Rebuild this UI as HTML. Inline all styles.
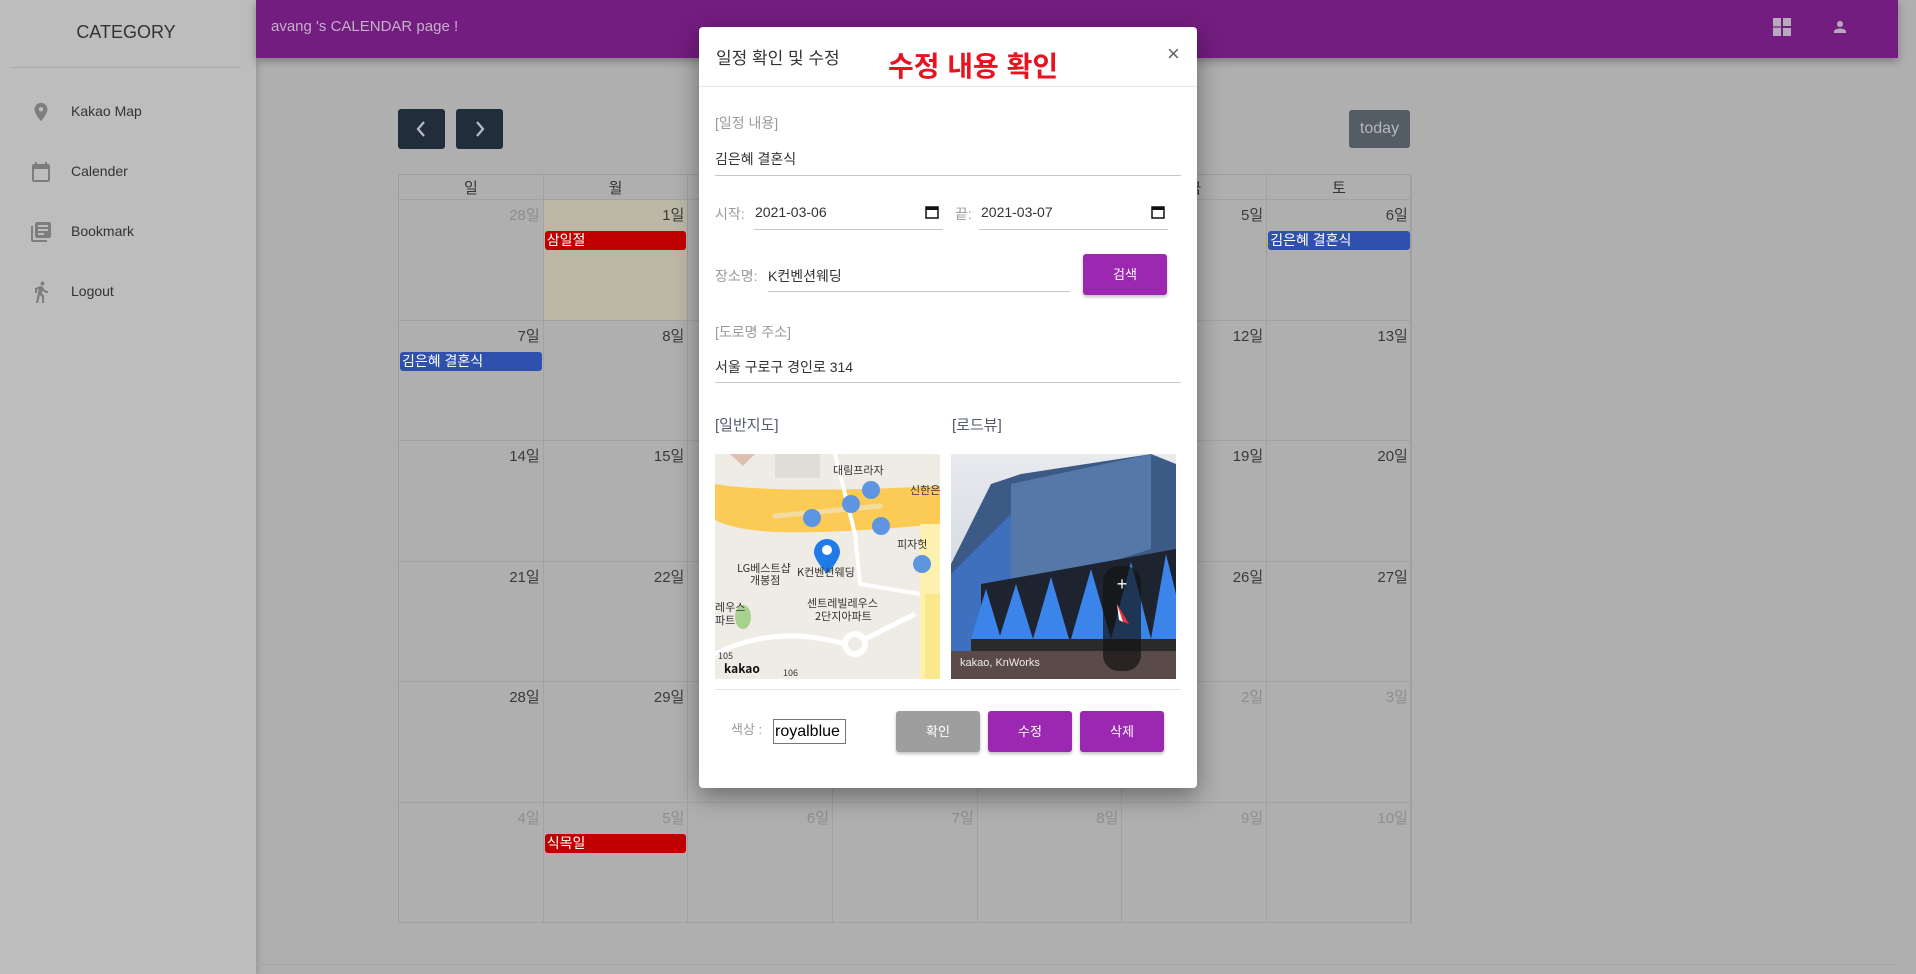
<!DOCTYPE html>
<html><head><meta charset="utf-8"><style>
*{box-sizing:border-box;margin:0;padding:0}
body{width:1916px;height:974px;overflow:hidden;background:#afafaf;font-family:"Liberation Sans","Noto Sans CJK KR",sans-serif;position:relative}
.abs{position:absolute}
#side{left:0;top:0;width:256px;height:974px;background:#bdbdbd;box-shadow:2px 0 6px rgba(0,0,0,.15)}
#top{left:256px;top:0;width:1642px;height:58px;background:#741d80;box-shadow:0 3px 8px rgba(0,0,0,.3)}
.menu{position:absolute;left:71px;font-size:14px;color:#333}
.nav{position:absolute;top:109px;width:47px;height:40px;background:#212d3b;border-radius:3px}
.cal{position:absolute;left:398px;top:174px;width:1013px;height:749px;border:1px solid #9e9e9e}
.cell{position:absolute;border-right:1px solid #a2a2a2;border-bottom:1px solid #a2a2a2;font-size:15px;color:#3a3a3a;text-align:right;padding:4px 3px 0 0}
.g{color:#8e8e8e}
.ev{position:absolute;height:19px;color:#fff;font-size:14px;line-height:19px;padding-left:2px;border-radius:3px}
#modal{left:699px;top:27px;width:498px;height:761px;background:#fff;border-radius:4px;box-shadow:0 8px 25px rgba(0,0,0,.4)}
.lbl{position:absolute;font-size:14px;color:#9a9a9a}
.val{position:absolute;font-size:14px;color:#333}
.ul{position:absolute;height:1px;background:#c8c8c8}
.btn{position:absolute;top:684px;width:84px;height:41px;color:#fff;font-size:13px;text-align:center;line-height:41px;border-radius:3px;box-shadow:0 2px 3px rgba(0,0,0,.25)}
</style></head><body>
<div id="side" class="abs">
 <div class="abs" style="left:0;width:252px;top:22px;text-align:center;font-size:18px;color:#333">CATEGORY</div>
 <div class="abs" style="left:11px;width:230px;top:67px;height:1px;background:#a8a8a8"></div>
 <svg class="abs" style="left:30px;top:100px" width="22" height="24" viewBox="0 0 24 24"><path fill="#7d7d7d" d="M12 2C8.1 2 5 5.1 5 9c0 5.2 7 13 7 13s7-7.8 7-13c0-3.9-3.1-7-7-7zm0 9.5a2.5 2.5 0 110-5 2.5 2.5 0 010 5z"/></svg>
 <div class="menu" style="top:103px">Kakao Map</div>
 <svg class="abs" style="left:29px;top:160px" width="24" height="24" viewBox="0 0 24 24"><path fill="#7d7d7d" d="M19 4h-1V2h-2v2H8V2H6v2H5c-1.1 0-2 .9-2 2v14c0 1.1.9 2 2 2h14c1.1 0 2-.9 2-2V6c0-1.1-.9-2-2-2zm0 16H5V9h14v11z"/></svg>
 <div class="menu" style="top:163px">Calender</div>
 <svg class="abs" style="left:29px;top:220px" width="24" height="24" viewBox="0 0 24 24"><path fill="#7d7d7d" d="M4 6H2v14c0 1.1.9 2 2 2h14v-2H4V6zm16-4H8c-1.1 0-2 .9-2 2v12c0 1.1.9 2 2 2h12c1.1 0 2-.9 2-2V4c0-1.1-.9-2-2-2zm-1 9H9V9h10v2zm-4 4H9v-2h6v2zm4-8H9V5h10v2z"/></svg>
 <div class="menu" style="top:223px">Bookmark</div>
 <svg class="abs" style="left:29px;top:280px" width="24" height="24" viewBox="0 0 24 24"><path fill="#7d7d7d" d="M13.5 5.5c1.1 0 2-.9 2-2s-.9-2-2-2-2 .9-2 2 .9 2 2 2zM9.8 8.9L7 23h2.1l1.8-8 2.1 2v6h2v-7.5l-2.1-2 .6-3C14.8 12 16.8 13 19 13v-2c-1.9 0-3.5-1-4.3-2.4l-1-1.6c-.4-.6-1-1-1.7-1-.3 0-.5.1-.8.1L6 8.3V13h2V9.6l1.8-.7"/></svg>
 <div class="menu" style="top:283px">Logout</div>
</div>
<div id="top" class="abs">
 <div class="abs" style="left:15px;top:18px;font-size:15px;color:#c4b0c8">avang 's CALENDAR page !</div>
 <svg class="abs" style="left:1517px;top:18px" width="18" height="18" viewBox="0 0 18 18"><path fill="#b8a9bc" d="M0 0h8v18H0zM10 0h8v8h-8zM10 10h8v8h-8z"/><path stroke="#741d80" stroke-width="1.2" d="M0 9h8"/></svg>
 <svg class="abs" style="left:1575px;top:18px" width="18" height="18" viewBox="0 0 24 24"><path fill="#b8a9bc" d="M12 12c2.2 0 4-1.8 4-4s-1.8-4-4-4-4 1.8-4 4 1.8 4 4 4zm0 2c-2.7 0-8 1.3-8 4v2h16v-2c0-2.7-5.3-4-8-4z"/></svg>
</div>
<div class="nav" style="left:398px"><svg width="47" height="40"><path d="M26 13l-6 7 6 7" stroke="#b9bcc0" stroke-width="2.2" fill="none"/></svg></div>
<div class="nav" style="left:456px"><svg width="47" height="40"><path d="M21 13l6 7-6 7" stroke="#b9bcc0" stroke-width="2.2" fill="none"/></svg></div>
<div class="abs" style="left:1349px;top:110px;width:61px;height:38px;background:#545c66;border-radius:3px;color:#b5b8bb;font-size:16px;text-align:center;line-height:38px">today</div>
<div class="abs" style="left:256px;top:964px;width:1642px;height:1px;background:#a5a5a5"></div>
<div class="cal" id="cal"></div>
<script>
(function(){
var c=document.getElementById('cal'),h='';
var hd=['일','월','화','수','목','금','토'],cw=144.7;
for(var i=0;i<7;i++)h+='<div class="cell" style="left:'+(i*cw)+'px;top:0;width:'+cw+'px;height:25px;text-align:center;padding:2px 0 0;font-size:15px;color:#333">'+hd[i]+'</div>';
var d=[[28,1,2,3,4,5,6],[7,8,9,10,11,12,13],[14,15,16,17,18,19,20],[21,22,23,24,25,26,27],[28,29,30,31,1,2,3],[4,5,6,7,8,9,10]];
for(var r=0;r<6;r++)for(i=0;i<7;i++){var g=(r==0&&i==0)||(r==4&&i>=4)||r==5;
var bg=(r==0&&i==1)?'background:#bbb8a6;':'';
h+='<div class="cell'+(g?' g':'')+'" style="'+bg+'left:'+(i*cw)+'px;top:'+(25+r*120.5)+'px;width:'+cw+'px;height:120.5px">'+d[r][i]+'일</div>';}
function ev(r,i,t,col){h+='<div class="ev" style="background:'+col+';left:'+(i*cw+1)+'px;top:'+(25+r*120.5+31)+'px;width:'+(cw-3)+'px">'+t+'</div>';}
ev(0,1,'삼일절','#c00000');ev(0,6,'김은혜 결혼식','#3050ad');ev(1,0,'김은혜 결혼식','#3050ad');ev(5,1,'식목일','#c00000');
c.innerHTML=h;})();
</script>
<div id="modal" class="abs">
 <div class="abs" style="left:17px;top:17px;font-size:17px;color:#333">일정 확인 및 수정</div>
 <div class="abs" style="left:189px;top:18px;font-size:28px;font-weight:bold;color:#e8131f">수정 내용 확인</div>
 <div class="abs" style="left:468px;top:14px;font-size:22px;color:#666">×</div>
 <div class="abs" style="left:0;top:59px;width:498px;height:1px;background:#e8e8e8"></div>
 <div class="lbl" style="left:16px;top:86px">[일정 내용]</div>
 <div class="val" style="left:16px;top:122px">김은혜 결혼식</div>
 <div class="ul" style="left:16px;top:148px;width:466px"></div>
 <div class="lbl" style="left:16px;top:177px">시작:</div>
 <div class="val" style="left:56px;top:177px">2021-03-06</div>
 <svg class="abs" style="left:226px;top:178px" width="14" height="14" viewBox="0 0 14 14"><rect x="1" y="2" width="12" height="11" fill="none" stroke="#111" stroke-width="1.5"/><rect x="1" y="2" width="12" height="3" fill="#111"/></svg>
 <div class="ul" style="left:55px;top:202px;width:189px"></div>
 <div class="lbl" style="left:256px;top:177px">끝:</div>
 <div class="val" style="left:282px;top:177px">2021-03-07</div>
 <svg class="abs" style="left:452px;top:178px" width="14" height="14" viewBox="0 0 14 14"><rect x="1" y="2" width="12" height="11" fill="none" stroke="#111" stroke-width="1.5"/><rect x="1" y="2" width="12" height="3" fill="#111"/></svg>
 <div class="ul" style="left:280px;top:202px;width:189px"></div>
 <div class="lbl" style="left:16px;top:239px">장소명:</div>
 <div class="val" style="left:69px;top:239px">K컨벤션웨딩</div>
 <div class="ul" style="left:69px;top:264px;width:302px"></div>
 <div class="abs" style="left:384px;top:227px;width:84px;height:41px;background:#9c27b0;border-radius:3px;color:#fff;font-size:13px;text-align:center;line-height:41px;box-shadow:0 2px 3px rgba(0,0,0,.25)">검색</div>
 <div class="lbl" style="left:16px;top:295px">[도로명 주소]</div>
 <div class="val" style="left:16px;top:330px">서울 구로구 경인로 314</div>
 <div class="ul" style="left:16px;top:355px;width:466px"></div>
 <div class="abs" style="left:16px;top:387px;font-size:15px;color:#555a6e">[일반지도]</div>
 <div class="abs" style="left:253px;top:387px;font-size:15px;color:#555a6e">[로드뷰]</div>
 <svg class="abs" style="left:16px;top:427px" width="225" height="225" viewBox="0 0 225 225">
  <rect width="225" height="225" fill="#efece5"/>
  <path d="M0 30 Q60 40 225 32 L225 70 Q120 80 60 78 Q20 76 0 66 Z" fill="#fccb55"/>
  <path d="M60 62 L165 52" stroke="#f4dca0" stroke-width="5" stroke-linecap="round"/>
  <path d="M120 0 L140 80 L145 130 L205 140" stroke="#fff" stroke-width="4" fill="none"/>
  <rect x="205" y="70" width="20" height="155" fill="#fdf1b0"/>
  <rect x="210" y="140" width="15" height="85" fill="#fbe88a"/>
  <rect x="60" y="0" width="45" height="24" fill="#e0ddd7"/>
  <path d="M15 0 L40 0 L28 12 Z" fill="#dcc0b0"/>
  <circle cx="140" cy="190" r="10" fill="none" stroke="#fff" stroke-width="6"/>
  <path d="M0 200 Q60 170 130 190 M150 185 L200 160" stroke="#fff" stroke-width="5" fill="none"/>
  <ellipse cx="28" cy="163" rx="8" ry="12" fill="#a8d08f"/>
  <g fill="#5e95e0"><circle cx="97" cy="64" r="9"/><circle cx="136" cy="50" r="9"/><circle cx="156" cy="36" r="9"/><circle cx="166" cy="72" r="9"/><circle cx="207" cy="110" r="9"/></g>
  <path d="M112 85 a13 13 0 0 1 13 13 c0 8 -13 22 -13 22 s-13 -14 -13 -22 a13 13 0 0 1 13 -13z" fill="#1f7be8"/>
  <circle cx="112" cy="96" r="5" fill="#fff"/>
  <g font-size="11" fill="#333" font-family="Noto Sans CJK KR,sans-serif">
   <text x="118" y="20">대림프라자</text><text x="195" y="40">신한은</text><text x="182" y="94">피자헛</text>
   <text x="22" y="118">LG베스트샵</text><text x="35" y="130">개봉점</text><text x="82" y="122">K컨벤션웨딩</text>
   <text x="92" y="153">센트레빌레우스</text><text x="100" y="166">2단지아파트</text><text x="0" y="157">레우스</text><text x="0" y="170">파트</text>
   <text x="3" y="205" font-size="9">105</text><text x="68" y="222" font-size="9">106</text>
   <text x="9" y="219" font-weight="bold" font-size="12" fill="#111">kakao</text></g>
 </svg>
 <svg class="abs" style="left:252px;top:427px" width="225" height="225" viewBox="0 0 225 225">
  <defs><linearGradient id="sk" x1="0" y1="0" x2="0" y2="1"><stop offset="0" stop-color="#e8eaee"/><stop offset="1" stop-color="#c5ccd8"/></linearGradient></defs>
  <rect width="225" height="225" fill="url(#sk)"/>
  <path d="M0 110 L40 30 L70 20 L200 0 L225 10 L225 225 L0 225 Z" fill="#3c5a86"/>
  <path d="M60 30 L200 0 L200 95 L60 140 Z" fill="#5678a8"/>
  <path d="M0 120 L60 60 L60 200 L0 200 Z" fill="#3f6fbf"/>
  <path d="M30 130 L225 95 L225 190 L30 190 Z" fill="#1d2430"/>
  <g fill="#3a84ea"><path d="M35 135 L50 185 L20 185Z"/><path d="M65 130 L82 185 L48 185Z"/><path d="M100 123 L118 185 L82 185Z"/><path d="M140 115 L160 185 L120 185Z"/><path d="M180 108 L200 185 L160 185Z"/><path d="M215 100 L225 140 L225 185 L200 185Z"/></g>
  <rect x="20" y="185" width="205" height="12" fill="#2a2a2a"/>
  <rect x="0" y="197" width="225" height="28" fill="#5a4a48"/>
  <rect x="152" y="112" width="38" height="105" rx="16" fill="rgba(20,20,20,.7)"/>
  <text x="171" y="136" text-anchor="middle" fill="#fff" font-size="18">+</text>
  <path d="M166 150 L178 170 L172 168Z" fill="#e33"/><path d="M166 150 L172 168 L168 166Z" fill="#fff"/>
  <text x="9" y="212" fill="#eee" font-size="11" font-family="Liberation Sans,sans-serif">kakao, KnWorks</text>
 </svg>
 <div class="abs" style="left:16px;top:662px;width:466px;height:1px;background:#e6e6e6"></div>
 <div class="lbl" style="left:32px;top:692px;font-size:13px">색상 :</div>
 <div class="abs" style="left:74px;top:692px;width:73px;height:25px;border:1px solid #777;font-size:16px;color:#000;line-height:23px;padding-left:1px">royalblue</div>
 <div class="btn" style="left:197px;background:#9e9e9e">확인</div>
 <div class="btn" style="left:289px;background:#9c27b0">수정</div>
 <div class="btn" style="left:381px;background:#9c27b0">삭제</div>
</div>
</body></html>
